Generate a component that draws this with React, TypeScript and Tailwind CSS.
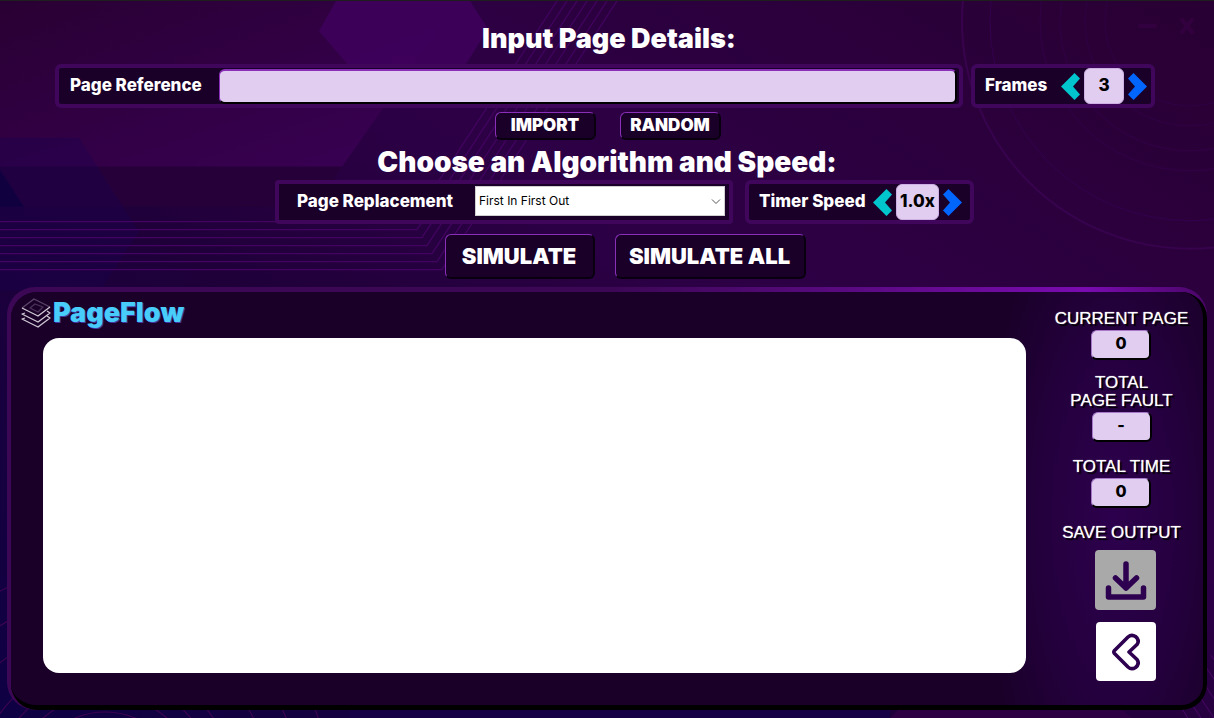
import React from 'react';

const HEADING = "font-['Inter','Open_Sans',sans-serif] font-black text-white";
const LABEL = "font-['Inter','Open_Sans',sans-serif] text-[17px] leading-6 pb-0.5 font-extrabold text-white whitespace-nowrap";
const CAPTION = "text-center font-['Liberation_Sans',Arial,sans-serif] text-[17px] leading-[18px] text-white [text-shadow:2px_2px_1px_#000,0_0_1px_#fff]";
const RAISED = 'rounded-md border-l border-t border-l-[#8a2fb8] border-t-[#8a2fb8] border-b-2 border-r-2 border-b-[#08000f] border-r-[#08000f] bg-[#1a0029]';

function Backdrop() {
  const offsets = [0, 1, 2, 3, 4, 5, 6];
  return (
    <svg className="absolute inset-0 h-full w-full" viewBox="0 0 1214 718" preserveAspectRatio="none" aria-hidden="true">
      <defs>
        <linearGradient id="base" x1="0" y1="1" x2="1" y2="0">
          <stop offset="0" stopColor="#0e0044" />
          <stop offset="0.4" stopColor="#1f0039" />
          <stop offset="0.6" stopColor="#2d0046" />
          <stop offset="1" stopColor="#290033" />
        </linearGradient>
        <linearGradient id="slab" x1="0" y1="0" x2="1" y2="1">
          <stop offset="0" stopColor="#290033" />
          <stop offset="1" stopColor="#3a0056" />
        </linearGradient>
      </defs>
      <rect width="1214" height="718" fill="url(#base)" />
      <polygon points="0,0 458,0 342,166 0,166" fill="url(#slab)" />
      <polygon points="0,166 342,166 316,206 24,206" fill="#260039" />
      <polygon points="336,0 470,0 488,28 448,92 372,92 319,30" fill="#410060" opacity="0.75" />
      <polygon points="0,137 79,137 139,231 100,290 0,290" fill="#1a0050" opacity="0.35" />
      <polygon points="0,170 24,206 0,206" fill="#100040" />
      <g fill="none" stroke="#430361" strokeWidth="1.2">
        {offsets.map((i) => (
          <path key={i} d={`M0 ${221 + i * 8}H${412 + i * 5}L${557 + i * 10} 0`} />
        ))}
      </g>
      <g fill="none" stroke="#3d0360" strokeWidth="1">
        <circle cx="1190" cy="20" r="228" stroke="#46065f" strokeWidth="2" opacity="0.5" />
        <circle cx="1190" cy="20" r="200" opacity="0.5" />
        <circle cx="1190" cy="20" r="150" opacity="0.35" />
        <circle cx="1190" cy="20" r="130" opacity="0.35" />
        <circle cx="1190" cy="20" r="105" opacity="0.3" />
        <circle cx="1190" cy="20" r="85" opacity="0.3" />
      </g>
      <g fill="none" stroke="#3c0350" strokeWidth="1.2">
        <circle cx="105" cy="790" r="78" />
        <circle cx="105" cy="790" r="95" />
        <circle cx="105" cy="790" r="112" />
        <circle cx="105" cy="790" r="130" />
        <circle cx="105" cy="790" r="165" />
        <circle cx="105" cy="790" r="195" />
        <circle cx="105" cy="790" r="225" />
      </g>
      <polygon points="350,708 890,708 890,718 350,718" fill="#160046" />
      <polygon points="900,708 1120,708 1132,718 890,718" fill="#2d0044" />
      <g stroke="#4a0566" strokeWidth="1">
        {offsets.map((i) => (
          <line key={i} x1={1176 + i * 7} y1={700 - i * 9} x2={1200 + i * 7} y2={736 - i * 9} />
        ))}
      </g>
    </svg>
  );
}

function Chevron({ right = false }: { right?: boolean }) {
  return (
    <svg width="19" height="27" viewBox="0 0 19 27" aria-hidden="true">
      {right ? (
        <polygon points="19,13.5 5.5,0 0,5.5 7,13.5 0,21.5 5.5,27" fill="#0066ff" />
      ) : (
        <polygon points="0,13.5 13.5,0 19,5.5 12,13.5 19,21.5 13.5,27" fill="#00c5cc" />
      )}
    </svg>
  );
}

function Stepper({ label, value, rowClass, boxClass }: { label: string; value: string; rowClass: string; boxClass: string }) {
  return (
    <div className={`flex h-11 items-center border-4 border-[#40065c] bg-[#1a0029] pl-2.5 rounded-md ${rowClass}`}>
      <span className={`${LABEL} flex-1`}>{label}</span>
      <button type="button" aria-label={`Decrease ${label}`} className="flex shrink-0">
        <Chevron />
      </button>
      <output
        aria-label={label}
        className={`ml-1 flex h-9 items-center justify-center rounded-md border border-[#cdb0e4] bg-[#e0cdf0] font-['Inter',sans-serif] text-[17px] font-extrabold text-black ${boxClass}`}
      >
        {value}
      </output>
      <button type="button" aria-label={`Increase ${label}`} className="flex shrink-0">
        <Chevron right />
      </button>
    </div>
  );
}

function Stat({ label, value }: { label: React.ReactNode; value: string }) {
  return (
    <div className="flex flex-col items-center gap-0.5">
      <span className={CAPTION}>{label}</span>
      <output className="flex h-[30px] w-[60px] items-center justify-center rounded-md border-l border-t border-b-2 border-r-2 border-[#a678c8] border-b-black border-r-black bg-[#e0cdf0] pb-1 font-['Inter',sans-serif] text-base font-extrabold text-black">
        {value}
      </output>
    </div>
  );
}

function Logo() {
  return (
    <svg width="30" height="30" viewBox="0 0 30 30" fill="none" strokeWidth="1.3" strokeLinejoin="round" aria-hidden="true">
      <path d="M1 10 L13 1 L29 9" stroke="#5b4668" />
      <path d="M9 10 L14 6 L22 9 L17 14 Z" stroke="#4a3358" />
      <path d="M1 10 L17 18 L29 9" stroke="#cfc8d4" />
      <path d="M4 15 L1 16 L17 24 L29 15 L26 13" stroke="#cfc8d4" />
      <path d="M4 20 L1 21 L17 29 L29 20 L26 18" stroke="#cfc8d4" />
    </svg>
  );
}

export default function App() {
  return (
    <div className="relative flex min-h-screen flex-col overflow-hidden border-t border-[#1e1e1e] bg-[#1f0039]">
      <Backdrop />
      <div className="absolute right-4 top-4 z-10 flex gap-5">
        <button type="button" aria-label="Minimize">
          <svg width="20" height="20" viewBox="0 0 20 20" stroke="#33003f" strokeWidth="4" strokeLinecap="round"><path d="M2 9H17" /></svg>
        </button>
        <button type="button" aria-label="Close">
          <svg width="20" height="20" viewBox="0 0 20 20" stroke="#33003f" strokeWidth="4" strokeLinecap="round"><path d="M4 3L14 15M14 3L4 15" /></svg>
        </button>
      </div>

      <header className="relative flex flex-col items-center">
        <h1 className={`${HEADING} mt-5 pl-1 text-[27px] leading-9`}>Input Page Details:</h1>

        <div className="mt-[7px] flex w-full gap-2 pl-[55px] pr-[59px]">
          <div className="flex h-11 flex-1 items-center rounded-md border-4 border-[#40065c] bg-[#1a0029] pl-[11px] pr-0.5">
            <label htmlFor="reference" className={`${LABEL} w-[149px]`}>Page Reference</label>
            <input
              id="reference"
              type="text"
              className="h-[35px] min-w-0 flex-1 rounded-md border-b-2 border-l border-r-2 border-t-2 border-[#8a2fb8] border-b-black border-r-black bg-[#e0cdf0] px-2 font-['Inter',sans-serif] text-black outline-none"
            />
          </div>
          <Stepper label="Frames" value="3" rowClass="w-[184px] pr-1" boxClass="mr-1 w-10" />
        </div>

        <div className="ml-0.5 mt-1 flex gap-6">
          <button type="button" className={`${HEADING} ${RAISED} h-7 w-[101px] text-[17px] leading-none`}>IMPORT</button>
          <button type="button" className={`${HEADING} ${RAISED} h-7 w-[101px] text-[17px] leading-none`}>RANDOM</button>
        </div>

        <h2 className={`${HEADING} mt-1 text-[28px] leading-9`}>Choose an Algorithm and Speed:</h2>

        <div className="ml-[35px] flex gap-3">
          <div className="flex h-11 w-[458px] items-center rounded-sm border-4 border-[#40065c] bg-[#1a0029] pl-[18px] pr-1">
            <label htmlFor="algorithm" className={`${LABEL} flex-1`}>Page Replacement</label>
            <div className="relative flex pb-0.5">
              <select
                id="algorithm"
                className="h-[30px] w-[250px] appearance-none border border-[#d0d0d0] bg-white px-[3px] font-['Inter',sans-serif] text-xs text-black outline-none"
              >
                <option>First In First Out</option>
              </select>
              <svg className="pointer-events-none absolute right-1 top-3" width="10" height="8" viewBox="0 0 10 8" fill="none" stroke="#555" aria-hidden="true">
                <path d="M1 1.5L5 5.5L9 1.5" />
              </svg>
            </div>
          </div>
          <Stepper label="Timer Speed" value="1.0x" rowClass="w-[229px] pr-2" boxClass="mr-1 w-[43px]" />
        </div>

        <div className="ml-9 mt-2.5 flex gap-5">
          <button type="button" className={`${HEADING} ${RAISED} h-[45px] w-[150px] text-[22px] leading-none`}>SIMULATE</button>
          <button type="button" className={`${HEADING} ${RAISED} h-[45px] w-[191px] text-[22px] leading-none`}>SIMULATE ALL</button>
        </div>
      </header>

      <main className="relative mx-[7px] mb-2 mt-2 flex flex-1 rounded-[28px] bg-gradient-to-r from-[#3c0755] from-50% via-[#7a0bb0] via-90% to-[#4a0668] pl-1 pt-[5px]">
        <div className="flex flex-1 rounded-[26px] border-b-[5px] border-r-4 border-black bg-[#1a0029] bg-[radial-gradient(ellipse_130px_340px_at_right_90px_top_55%,#2d004d_0%,#25003f_50%,#1a0029_100%)] pl-2">
          <section className="flex flex-1 flex-col">
            <div className="flex h-[46px] items-center gap-0.5 pb-1 pl-0.5">
              <Logo />
              <span className="font-['Inter','Open_Sans',sans-serif] text-[27px] font-black leading-8 text-[#48cdfa] [text-shadow:1px_1px_0_#4438a0]">PageFlow</span>
            </div>
            <div className="mb-[32px] ml-6 flex-1 rounded-2xl bg-white" aria-label="Simulation output" />
          </section>

          <aside className="flex w-[177px] flex-col items-center pl-3.5 pt-[18px]">
            <Stat label="CURRENT PAGE" value="0" />
            <div className="mt-3.5">
              <Stat label={<>TOTAL<br />PAGE FAULT</>} value="-" />
            </div>
            <div className="mt-4">
              <Stat label="TOTAL TIME" value="0" />
            </div>
            <span id="save" className={`${CAPTION} mt-4`}>SAVE OUTPUT</span>
            <div className="flex flex-col items-center gap-3 pl-2 pt-2">
              <button type="button" aria-labelledby="save" className="flex h-[60px] w-[61px] items-center justify-center rounded-sm bg-[#a9a9a9]">
                <svg width="42" height="40" viewBox="0 0 42 40" fill="none" stroke="#2d0050" strokeWidth="5.5" strokeLinecap="round" strokeLinejoin="round" aria-hidden="true">
                  <path d="M21 4V28M10.5 18L21 28L31.500 18M3.500 28V37H38.500V28" />
                </svg>
              </button>
              <button type="button" aria-label="Back" className="flex h-[59px] w-[60px] items-center justify-center rounded-sm bg-white">
                <svg width="28" height="38" viewBox="0 0 28 38" fill="none" stroke="#2d0050" strokeWidth="3.6" strokeLinejoin="round" aria-hidden="true">
                  <path d="M2.500 17.500L16 4Q19.500 .9 23.500 3.500Q28 7 25 11.500L17 19L25 26.500Q28 31 23.500 34.500Q19.500 37.100 16 34L2.500 20.500Q1.200 19 2.500 17.500Z" />
                </svg>
              </button>
            </div>
          </aside>
        </div>
      </main>
    </div>
  );
}
